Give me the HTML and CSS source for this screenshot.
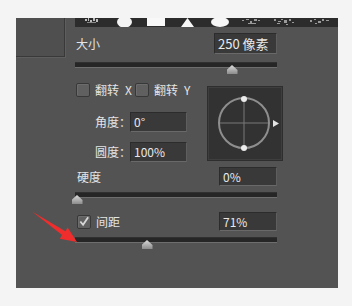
FILE: index.html
```html
<!DOCTYPE html>
<html lang="zh">
<head>
    <meta charset="UTF-8">
    <meta name="viewport" content="width=device-width, initial-scale=1.0">
    <title>画笔笔尖形状</title>
    <link rel="stylesheet" href="styles.css">
</head>
<body>
    <div class="panel">
        <div class="side"></div>

        <div class="main">
            <!-- 笔尖预览条 -->
            <div class="strip">
                <svg width="263" height="9" viewBox="0 0 263 9">
                    <g fill="#bdbdbd">
                        <rect x="10" y="1" width="2" height="2"/><rect x="13" y="0" width="1" height="3"/>
                        <rect x="15" y="2" width="2" height="2"/><rect x="18" y="0" width="2" height="3"/>
                        <rect x="21" y="1" width="2" height="3"/><rect x="12" y="4" width="9" height="1" fill="#8a8a8a"/>
                    </g>
                    <ellipse cx="49.5" cy="4" rx="7.5" ry="5.5" fill="#f4f4f4"/>
                    <rect x="72" y="0" width="18" height="8" fill="#f8f8f8"/>
                    <polygon points="112.5,0 119,9 106,9" fill="#f8f8f8"/>
                    <ellipse cx="145" cy="4" rx="9" ry="5" fill="#f6f6f6"/>
                    <g fill="#9a9a9a">
                        <rect x="167" y="2" width="2" height="1"/><rect x="171" y="1" width="3" height="1"/>
                        <rect x="175" y="3" width="2" height="2"/><rect x="179" y="1" width="3" height="2"/>
                        <rect x="183" y="2" width="2" height="1"/><rect x="173" y="5" width="8" height="1"/>
                        <rect x="199" y="1" width="2" height="2"/><rect x="203" y="3" width="3" height="1"/>
                        <rect x="206" y="1" width="2" height="1"/><rect x="209" y="2" width="3" height="3"/>
                        <rect x="214" y="1" width="2" height="2"/><rect x="217" y="4" width="2" height="1"/>
                        <rect x="202" y="5" width="3" height="1"/><rect x="211" y="6" width="2" height="1"/>
                        <rect x="235" y="2" width="2" height="2"/><rect x="239" y="1" width="2" height="1"/>
                        <rect x="243" y="3" width="3" height="2"/><rect x="247" y="1" width="2" height="2"/>
                        <rect x="251" y="2" width="3" height="1"/><rect x="240" y="5" width="2" height="1"/>
                    </g>
                </svg>
            </div>

            <div class="row row-size">
                <span class="label">大小</span>
                <div class="field wide">250 像素</div>
            </div>
            <div class="slider">
                <span class="thumb" style="left: 151.5px"></span>
            </div>

            <div class="block">
                <div class="block-left">
                    <div class="checks">
                        <span class="check"></span>
                        <span class="check-text">翻转<span class="axis">X</span></span>
                        <span class="check second"></span>
                        <span class="check-text">翻转<span class="axis">Y</span></span>
                    </div>
                    <div class="angle-row first">
                        <span class="angle-label">角度：</span>
                        <div class="field small">0°</div>
                    </div>
                    <div class="angle-row">
                        <span class="angle-label">圆度：</span>
                        <div class="field small">100%</div>
                    </div>
                </div>
                <div class="dial">
                    <svg width="74" height="73" viewBox="0 0 74 73">
                        <line x1="11" y1="36" x2="61" y2="36" stroke="#787878" stroke-width="1"/>
                        <line x1="36" y1="11" x2="36" y2="61" stroke="#787878" stroke-width="1"/>
                        <circle cx="36" cy="36" r="25" fill="none" stroke="#8e8e8e" stroke-width="2"/>
                        <circle cx="36" cy="12" r="3" fill="#ececec"/>
                        <circle cx="36" cy="61" r="3" fill="#ececec"/>
                        <polygon points="65,33 71,36.5 65,40" fill="#e4e4e4"/>
                    </svg>
                </div>
            </div>

            <div class="row row-hard">
                <span class="label">硬度</span>
                <div class="field narrow">0%</div>
            </div>
            <div class="slider">
                <span class="thumb" style="left: -3.5px"></span>
            </div>

            <div class="row row-space">
                <span class="label">
                    <span class="check checked">
                        <svg width="13" height="13" viewBox="0 0 13 13">
                            <polyline points="2.5,6.5 5.5,10 11,2" fill="none" stroke="#d6d6d6" stroke-width="2"/>
                        </svg>
                    </span>
                    <span class="check-text">间距</span>
                </span>
                <div class="field narrow">71%</div>
            </div>
            <div class="slider">
                <span class="thumb" style="left: 66.5px"></span>
            </div>
        </div>
    </div>

    <!-- 红色箭头标注 -->
    <svg class="arrow" width="352" height="306" viewBox="0 0 352 306">
        <polygon points="32,211.5 65.4,231.3 67.6,227.4 77,242 59.8,238.8 62.1,235" fill="#ef2d2d"/>
    </svg>
</body>
</html>
```

FILE: styles.css
```css
body {
    margin: 0;
    background: #f4f4f4;
    font-family: "Noto Sans CJK SC", "Noto Sans", sans-serif;
    font-size: 12px;
    color: #e4e4e4;
}
.panel {
    margin: 18px 0 0 16px;
    width: 322px;
    height: 270px;
    background: #535353;
    display: flex;
    align-items: flex-start;
}
.side {
    width: 48px;
    height: 38px;
    background: #4f4f4f;
    border-right: 1px solid #393939;
    border-bottom: 1px solid #393939;
    box-shadow: 1px 1px 0 #5e5e5e;
}
.main {
    margin-left: 10px;
    width: 263px;
    display: flex;
    flex-direction: column;
}
.strip {
    height: 9px;
    background: #2c2c2c;
    overflow: hidden;
}
.strip svg {
    display: block;
}
.row {
    width: 202px;
    display: flex;
    justify-content: space-between;
    align-items: center;
}
.row-size {
    margin-top: 6px;
    height: 21px;
}
.row-hard {
    margin-top: 5px;
    height: 19px;
}
.row-space {
    margin-top: 14px;
    height: 19px;
}
.label {
    padding-left: 1px;
    display: flex;
    align-items: center;
    line-height: 1;
}
.row-hard .label {
    padding-left: 2px;
}
.field {
    box-sizing: border-box;
    height: 100%;
    background: #393939;
    border: 1px solid;
    border-color: #2c2c2c #5e5e5e #696969 #2c2c2c;
    padding-left: 3px;
    display: flex;
    align-items: center;
    color: #e8e8e8;
    line-height: 1;
}
.field.wide {
    width: 63px;
    font-size: 13px;
}
.field.narrow {
    width: 58px;
}
.field.small {
    width: 57px;
    height: 20px;
}
.slider {
    position: relative;
    width: 202px;
    height: 4px;
    background: #262626;
    border-top: 1px solid #303030;
    border-bottom: 1px solid #6e6e6e;
    margin-top: 6px;
}
.row-size + .slider {
    margin-top: 8px;
}
.thumb {
    position: absolute;
    top: 2px;
    width: 11px;
    height: 9px;
    background: linear-gradient(#dadada, #8c8c8c);
    clip-path: polygon(50% 0, 100% 55%, 100% 100%, 0 100%, 0 55%);
}
.block {
    margin-top: 15px;
    display: flex;
    align-items: flex-start;
}
.block-left {
    width: 133px;
}
.checks {
    height: 14px;
    display: flex;
    align-items: center;
}
.check {
    box-sizing: border-box;
    width: 14px;
    height: 14px;
    margin-left: 1px;
    background: #606060;
    border: 1px solid #383838;
    border-radius: 2px;
    box-shadow: inset 1px 1px 0 #6c6c6c;
    display: inline-flex;
}
.check.second {
    margin-left: 3px;
}
.check.checked svg {
    display: block;
    margin: -1px 0 0 0;
}
.check-text {
    margin-left: 5px;
    line-height: 1;
}
.axis {
    margin-left: 6px;
}
.angle-row {
    margin-top: 10px;
    height: 20px;
    display: flex;
    align-items: center;
}
.angle-row.first {
    margin-top: 15px;
}
.angle-label {
    width: 35px;
    margin-left: 20px;
    white-space: nowrap;
    line-height: 1;
}
.dial {
    box-sizing: border-box;
    margin-top: 4px;
    width: 74px;
    height: 73px;
    background: #323232;
    border: 1px solid #3e3e3e;
    box-shadow: 0 0 0 1px #2e2e2e;
}
.dial svg {
    display: block;
    margin: -1px;
}
.arrow {
    position: absolute;
    left: 0;
    top: 0;
    pointer-events: none;
}
```
